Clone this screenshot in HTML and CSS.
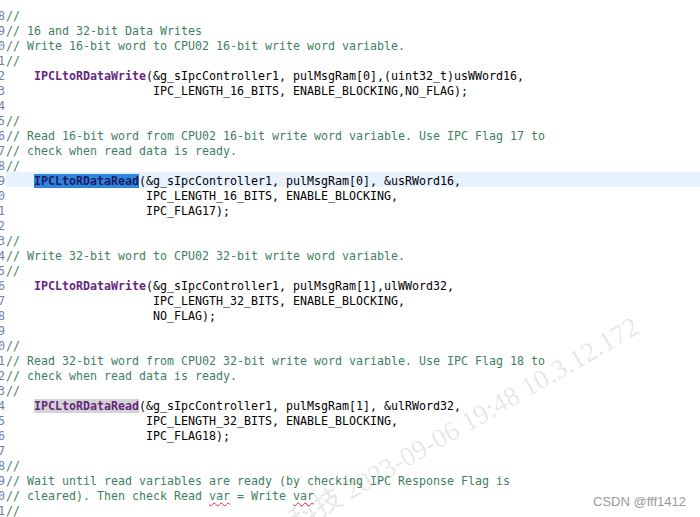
FILE: index.html
```html
<!DOCTYPE html>
<html>

<head>
    <title>IPC Data Writes</title>
    <link rel="stylesheet" href="styles.css">
</head>

<body>
    <div class="editor">
        <div class="line"><span class="num">8</span><span class="code"><span class="cm">//</span></span></div>
        <div class="line"><span class="num">9</span><span class="code"><span class="cm">// 16 and 32-bit Data Writes</span></span></div>
        <div class="line"><span class="num">0</span><span class="code"><span class="cm">// Write 16-bit word to CPU02 16-bit write word variable.</span></span></div>
        <div class="line"><span class="num">1</span><span class="code"><span class="cm">//</span></span></div>
        <div class="line"><span class="num">2</span><span class="code">    <span class="fn">IPCLtoRDataWrite</span>(&amp;g_sIpcController1, pulMsgRam[0],(uint32_t)usWWord16,</span></div>
        <div class="line"><span class="num">3</span><span class="code">                     IPC_LENGTH_16_BITS, ENABLE_BLOCKING,NO_FLAG);</span></div>
        <div class="line"><span class="num">4</span><span class="code"> </span></div>
        <div class="line"><span class="num">5</span><span class="code"><span class="cm">//</span></span></div>
        <div class="line"><span class="num">6</span><span class="code"><span class="cm">// Read 16-bit word from CPU02 16-bit write word variable. Use IPC Flag 17 to</span></span></div>
        <div class="line"><span class="num">7</span><span class="code"><span class="cm">// check when read data is ready.</span></span></div>
        <div class="line"><span class="num">8</span><span class="code"><span class="cm">//</span></span></div>
        <div class="line"><span class="num">9</span><span class="code current">    <span class="fn selected">IPCLtoRDataRead</span>(&amp;g_sIpcController1, pulMsgRam[0], &amp;usRWord16,</span></div>
        <div class="line"><span class="num">0</span><span class="code">                    IPC_LENGTH_16_BITS, ENABLE_BLOCKING,</span></div>
        <div class="line"><span class="num">1</span><span class="code">                    IPC_FLAG17);</span></div>
        <div class="line"><span class="num">2</span><span class="code"> </span></div>
        <div class="line"><span class="num">3</span><span class="code"><span class="cm">//</span></span></div>
        <div class="line"><span class="num">4</span><span class="code"><span class="cm">// Write 32-bit word to CPU02 32-bit write word variable.</span></span></div>
        <div class="line"><span class="num">5</span><span class="code"><span class="cm">//</span></span></div>
        <div class="line"><span class="num">6</span><span class="code">    <span class="fn">IPCLtoRDataWrite</span>(&amp;g_sIpcController1, pulMsgRam[1],ulWWord32,</span></div>
        <div class="line"><span class="num">7</span><span class="code">                     IPC_LENGTH_32_BITS, ENABLE_BLOCKING,</span></div>
        <div class="line"><span class="num">8</span><span class="code">                     NO_FLAG);</span></div>
        <div class="line"><span class="num">9</span><span class="code"> </span></div>
        <div class="line"><span class="num">0</span><span class="code"><span class="cm">//</span></span></div>
        <div class="line"><span class="num">1</span><span class="code"><span class="cm">// Read 32-bit word from CPU02 32-bit write word variable. Use IPC Flag 18 to</span></span></div>
        <div class="line"><span class="num">2</span><span class="code"><span class="cm">// check when read data is ready.</span></span></div>
        <div class="line"><span class="num">3</span><span class="code"><span class="cm">//</span></span></div>
        <div class="line"><span class="num">4</span><span class="code">    <span class="fn occurrence">IPCLtoRDataRead</span>(&amp;g_sIpcController1, pulMsgRam[1], &amp;ulRWord32,</span></div>
        <div class="line"><span class="num">5</span><span class="code">                    IPC_LENGTH_32_BITS, ENABLE_BLOCKING,</span></div>
        <div class="line"><span class="num">6</span><span class="code">                    IPC_FLAG18);</span></div>
        <div class="line"><span class="num">7</span><span class="code"> </span></div>
        <div class="line"><span class="num">8</span><span class="code"><span class="cm">//</span></span></div>
        <div class="line"><span class="num">9</span><span class="code"><span class="cm">// Wait until read variables are ready (by checking IPC Response Flag is</span></span></div>
        <div class="line"><span class="num">0</span><span class="code"><span class="cm">// cleared). Then check Read <span class="typo">var</span> = Write <span class="typo">var</span></span></span></div>
        <div class="line"><span class="num">1</span><span class="code"><span class="cm">//</span></span></div>
    </div>

    <div class="stamp">科技 2023-09-06 19:48 10.3.12.172</div>
    <div class="brand">CSDN @fff1412</div>
</body>

</html>
```

FILE: styles.css
```css
body {
    margin: 0;
    padding: 0;
    background-color: #fff;
    overflow: hidden;
}

.editor {
    padding-top: 7px;
    font-family: "DejaVu Sans Mono", monospace;
    font-size: 11.63px;
    color: #000;
}

.line {
    display: flex;
    height: 15px;
}

.num,
.code {
    box-sizing: border-box;
    padding-top: 4px;
    line-height: 11px;
}

.num {
    width: 5px;
    flex-shrink: 0;
    display: flex;
    justify-content: flex-end;
    overflow: hidden;
    margin-right: 1px;
    color: #6f7fa8;
}

.code {
    flex: 1;
    white-space: pre;
}

.current {
    background-color: #e8f2fe;
}

.cm {
    color: #3f7f5f;
}

.fn {
    color: #642880;
    font-weight: bold;
}

.selected {
    background-color: #2f86dc;
    color: #1d1a66;
}

.occurrence {
    background-color: #d4d4d4;
}

.typo {
    text-decoration: underline wavy #e03030;
    text-decoration-thickness: 1px;
    text-underline-offset: 2px;
}

.stamp {
    position: absolute;
    left: 300px;
    top: 506px;
    transform: rotate(-30deg);
    transform-origin: left bottom;
    font-family: "Liberation Serif", "Noto Sans CJK SC", serif;
    font-size: 27.5px;
    line-height: 30px;
    white-space: nowrap;
    color: rgba(0, 0, 0, 0.11);
}

.brand {
    position: absolute;
    left: 593px;
    top: 494px;
    font-family: "Liberation Sans", Arial, sans-serif;
    font-size: 13px;
    line-height: 16px;
    color: #9a9a9a;
}
```
